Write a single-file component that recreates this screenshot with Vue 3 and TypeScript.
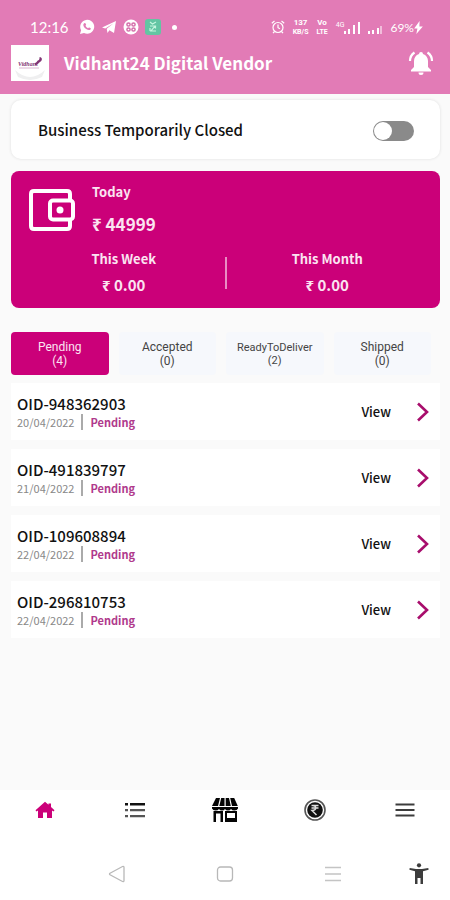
<script setup lang="ts">
import { ref } from 'vue'

interface Order {
  id: string
  date: string
  status: string
}

interface Tab {
  label: string
  count: number
  small?: boolean
}

const closed = ref(false)
const activeTab = ref('Pending')

const tabs: Tab[] = [
  { label: 'Pending', count: 4 },
  { label: 'Accepted', count: 0 },
  { label: 'ReadyToDeliver', count: 2, small: true },
  { label: 'Shipped', count: 0 },
]

const orders: Order[] = [
  { id: 'OID-948362903', date: '20/04/2022', status: 'Pending' },
  { id: 'OID-491839797', date: '21/04/2022', status: 'Pending' },
  { id: 'OID-109608894', date: '22/04/2022', status: 'Pending' },
  { id: 'OID-296810753', date: '22/04/2022', status: 'Pending' },
]
</script>

<template>
  <div class="screen">
    <header class="top">
      <div class="status-bar">
        <div class="status-left">
          <span class="clock">12:16</span>
          <svg width="16" height="16" viewBox="0 0 16 16" aria-hidden="true">
            <path d="M1 15l1.100-3.800A7 7 0 1 1 5 14z" fill="#fff" />
            <path d="M5.200 4.300c.8-.8 1.300-.3 1.900 1.300.2.500-.6 1-.5 1.300.5 1 1.300 1.800 2.400 2.300.4.100.9-.9 1.300-.7 1.700.8 1.900 1 1.200 1.900-1 1.200-2.600.8-4.400-.4S4.300 7 4.300 5.700c0-.5.4-1 .9-1.400z" fill="#e27bb6" />
          </svg>
          <svg width="16" height="16" viewBox="0 0 16 16" aria-hidden="true">
            <path d="M1 8.600L15 2l-2 12-4.600-2.700L6.500 14l-.8-4.300L12.300 4.600 4.300 9.600z" fill="#fff" />
          </svg>
          <svg width="16" height="16" viewBox="0 0 16 16" aria-hidden="true">
            <circle cx="8" cy="8" r="7.500" fill="#fff" />
            <g fill="none" stroke="#d56daa" stroke-width="1.500">
              <circle cx="5.500" cy="5.500" r="1.600" />
              <circle cx="10.500" cy="5.500" r="1.600" />
              <circle cx="5.500" cy="10.500" r="1.600" />
              <circle cx="10.500" cy="10.500" r="1.600" />
            </g>
          </svg>
          <svg width="16" height="16" viewBox="0 0 16 16" aria-hidden="true">
            <rect width="16" height="16" rx="3" fill="#63c5a3" />
            <path d="M5 3l2.500 2L11 3M5 7h5L6 12h5M5 9v3M10.500 6.500v3" fill="none" stroke="#c5f5df" stroke-width="1.200" />
          </svg>
          <i class="dot"></i>
        </div>
        <div class="status-right">
          <svg width="14" height="14" viewBox="0 0 14 14" fill="none" stroke="#fff" stroke-width="1.200" aria-hidden="true">
            <circle cx="7" cy="7.500" r="5" />
            <path d="M7 4.500v3.200l2 1M.8 3.200L3.500 1M13.200 3.200L10.500 1M3.500 11.500l-1.500 1.700M10.500 11.500l1.500 1.700" />
          </svg>
          <span class="stack"><b>137</b><small>KB/S</small></span>
          <span class="stack"><b>Vo</b><small>LTE</small></span>
          <span class="network">
            <small>4G</small>
            <svg width="16" height="13" viewBox="0 0 16 13" fill="#fff" aria-hidden="true">
              <path d="M0 10h2v3H0zM4 8h2v5H4zM9 4h2v9H9zM14 1h2v12h-2z" />
            </svg>
          </span>
          <svg width="14" height="13" viewBox="0 0 14 13" aria-hidden="true">
            <path d="M0 10h2v3H0zM4 9h2v4H4zM9 7h2v6H9zM12.500 5h1v8h-1z" fill="#fff" />
          </svg>
          <span class="battery">69%<svg width="9" height="13" viewBox="0 0 8 12" aria-hidden="true">
            <path d="M5 0L0 7h3L2 12l6-7H4.800z" fill="#fff" />
          </svg></span>
        </div>
      </div>
      <div class="app-bar">
        <svg width="38" height="36" viewBox="0 0 38 36" aria-hidden="true">
          <rect width="38" height="36" fill="#fff" />
          <path d="M4 25q15 14 30 0l-3 7q-12 6-24 0z" fill="#efeff0" />
          <text x="7" y="21" class="logo-text">Vidhant</text>
          <path d="M24 18c2 0 2-3 4-3 1-2 0-3 1-3 3 1 2 4 0 5s-2 3-5 3z" fill="#813575" />
          <path d="M8 23h20" stroke="#dab7d1" stroke-width="1" />
        </svg>
        <h1>Vidhant24 Digital Vendor</h1>
        <button type="button" aria-label="Notifications">
          <svg width="26" height="26" viewBox="0 0 26 26" aria-hidden="true">
            <path d="M13 2a2 2 0 0 1 2 2c3.200 1 5 3.800 5 7v6l3 3v1.500H3V20l3-3v-6c0-3.200 1.800-6 5-7a2 2 0 0 1 2-2zM10.500 22.500h5a2.500 2.500 0 0 1-5 0z" fill="#fff" />
            <path d="M6.500 2.500Q2 5.500 2 11M19.500 2.500Q24 5.500 24 11" fill="none" stroke="#fff" stroke-width="2.200" />
          </svg>
        </button>
      </div>
    </header>

    <main>
      <div class="closed-card">
        <label for="closed">Business Temporarily Closed</label>
        <input id="closed" v-model="closed" class="switch" type="checkbox" role="switch" />
      </div>

      <section class="earnings">
        <div class="today">
          <svg width="46" height="42" viewBox="0 0 46 42" fill="none" stroke="#fff" aria-hidden="true">
            <path d="M41 10V5q0-3-3-3H5Q2 2 2 5v32q0 3 3 3h33q3 0 3-3v-5" stroke-width="4" />
            <rect x="21" y="11.500" width="23" height="19" rx="3" stroke-width="4" />
            <circle cx="31" cy="21" r="3.500" fill="#fff" stroke="none" />
          </svg>
          <div>
            <h2>Today</h2>
            <p class="amount large">₹ 44999</p>
          </div>
        </div>
        <div class="periods">
          <div class="period">
            <h2>This Week</h2>
            <p class="amount">₹ 0.00</p>
          </div>
          <i class="divider"></i>
          <div class="period">
            <h2>This Month</h2>
            <p class="amount">₹ 0.00</p>
          </div>
        </div>
      </section>

      <div class="tabs">
        <button
          v-for="tab in tabs"
          :key="tab.label"
          type="button"
          :class="['tab', { active: tab.label === activeTab, small: tab.small }]"
          :aria-pressed="tab.label === activeTab"
          @click="activeTab = tab.label"
        >
          <span>{{ tab.label }}</span>
          <span>({{ tab.count }})</span>
        </button>
      </div>

      <ul class="orders">
        <li v-for="order in orders" :key="order.id" class="order">
          <div>
            <h3>{{ order.id }}</h3>
            <p class="meta">
              <span>{{ order.date }}</span>
              <i class="bar"></i>
              <strong>{{ order.status }}</strong>
            </p>
          </div>
          <a href="#" class="view">
            View
            <svg width="14" height="20" viewBox="0 0 14 20" aria-hidden="true">
              <path d="M2 1.500L11 10l-9 8.500" fill="none" stroke="#a80d6c" stroke-width="2.600" />
            </svg>
          </a>
        </li>
      </ul>
    </main>

    <nav class="tab-bar" aria-label="Main">
      <a href="#" aria-label="Home">
        <svg width="20" height="18" viewBox="0 0 20 18" aria-hidden="true">
          <path d="M10 .8l3.500 3V2.500H16V6l3.500 3.300-1 1.200L17 9.600V17h-5v-5.500H8V17H3V9.600l-1.500.9-1-1.200z" fill="#cb0079" />
        </svg>
      </a>
      <a href="#" aria-label="Orders">
        <svg width="20" height="16" viewBox="0 0 20 16" aria-hidden="true">
          <path d="M0 1h3v2.500H0zM5 1h15v2.500H5z" fill="#111" />
          <path d="M0 7h3v2.300H0zM5 7h15v2.300H5zM0 13h3v2.300H0zM5 13h15v2.300H5z" fill="#555" />
        </svg>
      </a>
      <a href="#" aria-label="Store">
        <svg width="26" height="26" viewBox="0 0 26 26" fill="#050505" aria-hidden="true">
          <path d="M4 1h4L6 9H0zM9.200 1h3.300v8H7.300zM13.700 1H17l1.800 8h-5.100zM18.200 1h4l3.600 8H20z" />
          <path d="M0 10h26v1.500q-1 2-3.500 2T19 12q-1 1.500-3 1.500T13 12q-1 1.500-3 1.500T7 12q-1 1.500-3.500 1.500T0 11.500z" />
          <path fill-rule="evenodd" d="M1.500 14H4v11H1.500zM4 14h7v11H8.500v-8.500H4zM13 14h12v11H13zM15 16v5h8v-5z" />
        </svg>
      </a>
      <a href="#" aria-label="Earnings">
        <svg width="22" height="22" viewBox="0 0 22 22" fill="none" aria-hidden="true">
          <circle cx="11" cy="11" r="10" stroke="#555" stroke-width="1.600" />
          <circle cx="11" cy="11" r="7.800" fill="#111" />
          <path d="M7.500 6.500h7M7.500 9h7M8 6.500c5-.5 5 5 0 5l4.500 4.500" stroke="#ddd" stroke-width="1.500" />
        </svg>
      </a>
      <a href="#" aria-label="Menu">
        <svg width="20" height="14" viewBox="0 0 20 14" aria-hidden="true">
          <path d="M.5 1.500h19M.5 7h19M.5 12.500h19" stroke="#3c3c3c" stroke-width="1.900" />
        </svg>
      </a>
    </nav>

    <div class="system-bar">
      <button type="button" aria-label="Back">
        <svg width="18" height="18" viewBox="0 0 18 18" fill="none" stroke="#b8b8b8" stroke-width="1.300" aria-hidden="true">
          <path d="M2 8.200L14.500 1.500q1.500-.5 1.500 1v13q0 1.500-1.500 1L2 9.800q-1-.8 0-1.600z" />
        </svg>
      </button>
      <button type="button" aria-label="Home screen">
        <svg width="18" height="18" viewBox="0 0 18 18" fill="none" stroke="#b8b8b8" stroke-width="1.300" aria-hidden="true">
          <rect x="1.500" y="2" width="15" height="14" rx="3" />
        </svg>
      </button>
      <button type="button" aria-label="Recent apps">
        <svg width="18" height="18" viewBox="0 0 18 18" stroke="#c4c4c4" stroke-width="1.300" aria-hidden="true">
          <path d="M1 2.500h16M1 9h16M1 15.500h16" />
        </svg>
      </button>
      <button type="button" aria-label="Accessibility">
        <svg width="20" height="22" viewBox="0 0 20 22" fill="#3c3c3c" aria-hidden="true">
          <circle cx="10" cy="2.300" r="2.100" />
          <path d="M.7 5L7 6h6l6.300-1 .3 1.800L14 8.300V21h-2.500v-6h-3v6H6V8.300L.4 6.800z" />
        </svg>
      </button>
    </div>
  </div>
</template>

<style>
body {
  margin: 0;
  background: #fafafa;
}
</style>

<style scoped>
.screen {
  display: flex;
  flex-direction: column;
  min-height: 100vh;
  background: #fafafa;
  color: #111;
  font-family: "Noto Sans CJK SC", "Noto Sans", sans-serif;
}
h1, h2, h3, p, ul {
  margin: 0;
  padding: 0;
}
button {
  border: 0;
  padding: 0;
  background: none;
  font: inherit;
}
svg {
  display: block;
  flex: none;
}
.top {
  box-sizing: border-box;
  height: 94px;
  padding-top: 16px;
  background: #e27bb6;
  color: #fff;
}
.status-bar {
  display: flex;
  justify-content: space-between;
  align-items: center;
  height: 22px;
  padding: 0 27px 0 30px;
  font-family: Roboto, sans-serif;
}
.status-left {
  display: flex;
  align-items: center;
  gap: 6px;
}
.clock {
  margin-right: 4px;
  font-family: Lato, sans-serif;
  font-size: 15px;
  line-height: 20px;
}
.dot {
  width: 5px;
  height: 5px;
  margin-left: 5px;
  border-radius: 50%;
  background: #fff;
}
.status-right {
  display: flex;
  align-items: center;
  gap: 8px;
}
.stack {
  display: flex;
  flex-direction: column;
  align-items: center;
  font-size: 8px;
  line-height: 10px;
}
.stack small {
  font-size: 7px;
  font-weight: 700;
  line-height: 9px;
}
.network {
  display: flex;
  align-items: center;
}
.network small {
  align-self: flex-start;
  font-size: 7px;
  line-height: 9px;
}
.battery {
  display: flex;
  align-items: center;
  font-family: Lato, sans-serif;
  font-size: 12px;
}
.app-bar {
  display: flex;
  align-items: center;
  height: 50px;
  padding: 0 16px 0 11px;
}
.logo-text {
  fill: #813575;
  font: italic 700 6px "Liberation Serif", serif;
}
h1 {
  flex: 1;
  margin-left: 15px;
  font-size: 17px;
  font-weight: 700;
  line-height: 24px;
}
main {
  flex: 1;
  padding: 6px 10px 0 11px;
}
.closed-card {
  display: flex;
  align-items: center;
  justify-content: space-between;
  height: 59px;
  padding: 0 26px 0 27px;
  border-radius: 10px;
  background: #fff;
  box-shadow: 0 0 3px #ddd;
  font-size: 15px;
  font-weight: 500;
}
.switch {
  appearance: none;
  display: flex;
  align-items: center;
  box-sizing: border-box;
  width: 41px;
  height: 20px;
  margin: 2px 0 0;
  padding: 1px;
  border-radius: 10px;
  background: #8a8a8a;
}
.switch::before {
  content: "";
  width: 18px;
  height: 18px;
  border-radius: 50%;
  background: #fff;
}
.switch:checked {
  justify-content: flex-end;
  background: #cb0079;
}
.earnings {
  box-sizing: border-box;
  height: 137px;
  margin-top: 12px;
  padding: 12px 0 0;
  border-radius: 8px;
  background: #cb0079;
  color: #fbe4f1;
}
.today {
  display: flex;
  gap: 17px;
  padding-left: 18px;
}
.today svg {
  margin-top: 6px;
}
h2 {
  font-size: 13px;
  font-weight: 700;
  line-height: 18px;
}
.amount {
  margin-top: 6px;
  font-size: 15px;
  font-weight: 700;
  line-height: 22px;
}
.large {
  margin-top: 11px;
  font-size: 17px;
  line-height: 24px;
}
.periods {
  display: flex;
  align-items: center;
  margin-top: 14px;
}
.period {
  flex: 1;
  text-align: center;
}
.period:first-child {
  padding-left: 12px;
}
.period:last-child {
  padding-right: 12px;
}
.divider {
  width: 2px;
  height: 32px;
  background: #e98cc3;
}
.tabs {
  display: grid;
  grid-template-columns: repeat(4, 1fr);
  gap: 10px;
  margin: 24px 9px 0 0;
}
.tab {
  display: flex;
  flex-direction: column;
  align-items: center;
  justify-content: center;
  height: 43px;
  border-radius: 4px;
  background: #f6f8fc;
  color: #444;
  font-family: Roboto, sans-serif;
  font-size: 12px;
  line-height: 14px;
}
.tab.small {
  font-size: 11px;
  line-height: 13px;
}
.tab.active {
  background: #cb0079;
  color: #fbe4f1;
}
.orders {
  display: flex;
  flex-direction: column;
  gap: 9px;
  margin-top: 8px;
  list-style: none;
}
.order {
  display: flex;
  align-items: center;
  justify-content: space-between;
  height: 57px;
  padding: 0 10px 0 6px;
  background: #fff;
}
h3 {
  font-size: 15px;
  font-weight: 500;
  line-height: 20px;
}
.meta {
  display: flex;
  align-items: center;
  gap: 7px;
  font-size: 11px;
  line-height: 16px;
  color: #888;
}
.bar {
  width: 2px;
  height: 16px;
  background: #aaa;
}
.meta strong {
  color: #b03a8c;
  font-weight: 700;
}
.view {
  display: flex;
  align-items: center;
  gap: 25px;
  color: #111;
  font-size: 13px;
  font-weight: 500;
  text-decoration: none;
}
.tab-bar {
  display: grid;
  grid-template-columns: repeat(5, 1fr);
  height: 40px;
  background: #fff;
}
.tab-bar a {
  display: grid;
  place-items: center;
}
.system-bar {
  display: grid;
  grid-template-columns: 63px 1fr 1fr 1fr 63px;
  height: 70px;
  background: #fff;
}
.system-bar button {
  display: grid;
  place-items: center;
  height: 50px;
  margin-top: 19px;
}
.system-bar button:first-child {
  grid-column: 2;
}
</style>
